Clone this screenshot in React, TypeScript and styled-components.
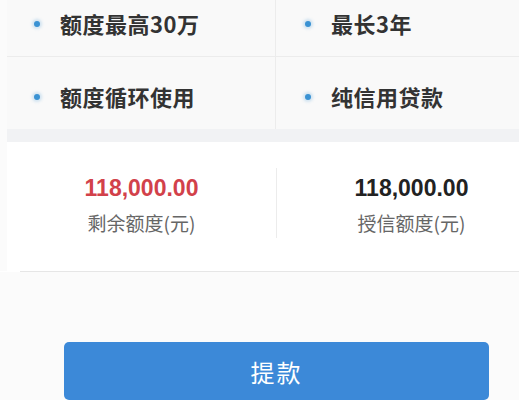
import React from 'react';
import styled, { createGlobalStyle } from 'styled-components';

const GlobalStyle = createGlobalStyle`
  html, body {
    margin: 0;
    padding: 0;
    background: #fbfbfb;
  }
  body {
    font-family: 'Liberation Sans', 'Noto Sans CJK SC', sans-serif;
    overflow: hidden;
  }
`;

const Page = styled.div`
  width: 519px;
  height: 400px;
  overflow: hidden;
  background: #fbfbfb;
`;

const Sheet = styled.div`
  width: 545px;
`;

const FeatureGrid = styled.div`
  display: grid;
  grid-template-columns: 269px 1fr;
  margin: -15px 0 0 7px;
  background: #f9f9f9;
`;

const FeatureCell = styled.div<{ $left?: boolean; $lined?: boolean }>`
  height: 72px;
  box-sizing: border-box;
  padding: 5px 0 0 ${p => (p.$left ? 27 : 29)}px;
  display: flex;
  align-items: center;
  border-right: ${p => (p.$left ? '1px solid #ececec' : 'none')};
  border-bottom: ${p => (p.$lined ? '1px solid #ececec' : 'none')};
`;

const Dot = styled.span`
  width: 6px;
  height: 6px;
  border-radius: 50%;
  background: #3a92d3;
  box-shadow: 0 0 3px 2px rgba(58, 146, 211, 0.22);
  margin: 2px 20px 0 0;
  flex-shrink: 0;
`;

const FeatureText = styled.span`
  font-family: 'Noto Sans CJK SC', sans-serif;
  font-size: 22px;
  font-weight: 700;
  color: #333;
  letter-spacing: 0.5px;
`;

const Band = styled.div`
  height: 13px;
  margin-left: 7px;
  background: #f1f2f4;
`;

const Summary = styled.div`
  margin-left: 7px;
  background: #fff;
  padding: 26px 0 33px;
`;

const SummaryRow = styled.div`
  display: grid;
  grid-template-columns: 269px 270px;
`;

const Amount = styled.div<{ $divided?: boolean }>`
  height: 70px;
  display: flex;
  flex-direction: column;
  align-items: center;
  border-left: ${p => (p.$divided ? '1px solid #ececec' : 'none')};
`;

const Value = styled.div<{ $red?: boolean }>`
  margin-top: 5px;
  font-family: 'Liberation Sans', 'Noto Sans CJK SC', sans-serif;
  font-size: 23px;
  font-weight: 700;
  line-height: 30px;
  color: ${p => (p.$red ? '#d2414a' : '#222')};
`;

const Caption = styled.div`
  margin-top: 5px;
  font-family: 'Noto Sans CJK SC', sans-serif;
  font-size: 19px;
  line-height: 30px;
  color: #666;
`;

const Rule = styled.div`
  height: 1px;
  background: #e6e6e6;
`;

const RuleWrap = styled.div`
  background: #fff;
  padding-left: 20px;
`;

const Actions = styled.div`
  padding: 70px 0 0 64px;
`;

const WithdrawButton = styled.button`
  width: 425px;
  height: 58px;
  border: none;
  border-radius: 5px;
  background: #3c89d8;
  color: #fff;
  font-family: 'Noto Sans CJK SC', sans-serif;
  font-size: 24px;
  letter-spacing: 2px;
  padding: 0;
`;

const features = [
  ['额度最高30万', '最长3年'],
  ['额度循环使用', '纯信用贷款'],
];

export default function App() {
  return (
    <Page>
      <GlobalStyle />
      <Sheet>
        <FeatureGrid>
          {features.map((row, i) =>
            row.map((text, j) => (
              <FeatureCell key={text} $left={j === 0} $lined={i === 0}>
                <Dot />
                <FeatureText>{text}</FeatureText>
              </FeatureCell>
            ))
          )}
        </FeatureGrid>
        <Band />
        <Summary>
          <SummaryRow>
            <Amount>
              <Value $red>118,000.00</Value>
              <Caption>剩余额度(元)</Caption>
            </Amount>
            <Amount $divided>
              <Value>118,000.00</Value>
              <Caption>授信额度(元)</Caption>
            </Amount>
          </SummaryRow>
        </Summary>
        <RuleWrap>
          <Rule />
        </RuleWrap>
      </Sheet>
      <Actions>
        <WithdrawButton>提款</WithdrawButton>
      </Actions>
    </Page>
  );
}
